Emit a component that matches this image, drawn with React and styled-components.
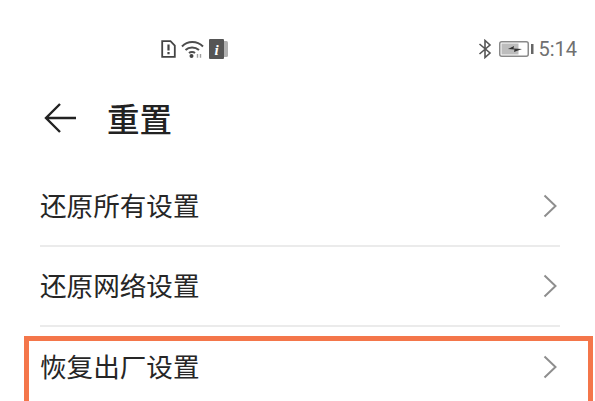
import styled, { createGlobalStyle } from 'styled-components';

const GlobalStyle = createGlobalStyle`
  html, body {
    margin: 0;
    padding: 0;
    background: #ffffff;
    overflow: hidden;
  }
`;

const Page = styled.div`
  position: relative;
  width: 595px;
  height: 401px;
  overflow: hidden;
  background: #ffffff;
  font-family: "Noto Sans CJK SC", "Liberation Sans", sans-serif;
  color: #262626;
`;

const StatusBar = styled.div`
  height: 38px;
  padding-top: 30px;
  display: flex;
  align-items: center;
  justify-content: space-between;
  padding-left: 161px;
  padding-right: 18px;
`;

const StatusGroup = styled.div`
  display: flex;
  align-items: center;
  gap: ${(p) => p.$gap}px;
`;

const Clock = styled.span`
  font-family: "Roboto", "Liberation Sans", sans-serif;
  font-size: 20px;
  color: #707070;
  margin-left: -3px;
`;

const Header = styled.div`
  height: 64px;
  margin-top: 18px;
  display: flex;
  align-items: center;
  padding-left: 44px;
  gap: 31px;
`;

const Title = styled.h1`
  margin: 0;
  font-size: 32.5px;
  font-weight: 500;
  line-height: 44px;
  color: #222222;
`;

const List = styled.div`
  margin-top: 17px;
  padding: 0 35px 0 40px;
`;

const Row = styled.div`
  box-sizing: border-box;
  height: 80px;
  display: flex;
  align-items: center;
  justify-content: space-between;
  padding-right: 3px;
  border-bottom: 2px solid #ebebeb;
  &:last-child {
    height: 75px;
    padding-top: 5px;
    border-bottom: none;
  }
`;

const RowLabel = styled.span`
  font-size: 26.6px;
  line-height: 36px;
  margin-bottom: 2px;
  color: #262626;
`;

const Highlight = styled.div`
  position: absolute;
  left: 24px;
  right: 2px;
  top: 336px;
  bottom: 0;
  border: 5px solid #f4764a;
  border-bottom: none;
  pointer-events: none;
`;

const Chevron = () => (
  <svg width="14" height="24" viewBox="0 0 14 24" fill="none" stroke="#8e8e8e" strokeWidth="2">
    <path d="M1.5 1.5 L12.5 12 L1.5 22.5" />
  </svg>
);

const BackArrow = () => (
  <svg width="32" height="32" viewBox="0 0 32 32" fill="none" stroke="#222222" strokeWidth="2.4">
    <path d="M16 2 L2 16 L16 30 M2 16 H32" />
  </svg>
);

const SimAlert = () => (
  <svg width="15" height="18" viewBox="0 0 15 18" fill="none">
    <path d="M1.2 1.2 H9.5 L13.8 5.5 V16.8 H1.2 Z" stroke="#444444" strokeWidth="1.8" />
    <path d="M7.5 4.5 V10.5 M7.5 12 V14.2" stroke="#444444" strokeWidth="2.2" />
  </svg>
);

const Wifi = () => (
  <svg width="23" height="18" viewBox="0 0 23 18" fill="none" stroke="#4d4d4d" strokeWidth="2">
    <path d="M1 6.5 C6.5 0.5 16 0.5 22 6.5" />
    <path d="M4.5 10 C8 6.5 14 6.5 18 10" />
    <path d="M8 13 C9.5 11.8 12.5 11.8 14 13" />
    <circle cx="10.5" cy="16" r="2" fill="#444444" stroke="none" />
    <path d="M16.5 14 V17.8 M19.5 14 V17.8" stroke="#a0a0a0" strokeWidth="1.4" />
  </svg>
);

const InfoCard = () => (
  <svg width="19" height="20" viewBox="0 0 19 20">
    <rect x="13" y="2" width="6" height="16" rx="1.5" fill="#b0b0b0" />
    <rect x="0" y="0" width="15" height="20" rx="1" fill="#555555" />
    <text x="7.5" y="15.5" fontSize="15" fontStyle="italic" fontWeight="700" textAnchor="middle" fill="#ffffff" fontFamily="Liberation Serif, serif">i</text>
  </svg>
);

const Bluetooth = () => (
  <svg width="14" height="20" viewBox="0 0 14 20" fill="none" stroke="#555555" strokeWidth="1.6">
    <path d="M1.5 5 L12 14 L7 18.5 V1.5 L12 6 L1.5 15" />
  </svg>
);

const Battery = () => (
  <svg width="35" height="16" viewBox="0 0 35 16">
    <rect x="0.75" y="0.75" width="28.5" height="14.5" rx="2" fill="none" stroke="#8a8a8a" strokeWidth="1.5" />
    <rect x="2.5" y="2.5" width="17" height="11" fill="#bdbdbd" />
    <path d="M9 8 L15 5 L14.5 7.5 L23 8 L15 11 L15.5 8.5 Z" fill="#333333" />
    <rect x="32" y="3" width="2.5" height="10" fill="#666666" />
  </svg>
);

const rows = ['还原所有设置', '还原网络设置', '恢复出厂设置'];

export default function App() {
  return (
    <Page>
      <GlobalStyle />
      <StatusBar>
        <StatusGroup $gap={5}>
          <SimAlert />
          <Wifi />
          <InfoCard />
        </StatusGroup>
        <StatusGroup $gap={7}>
          <Bluetooth />
          <Battery />
          <Clock>5:14</Clock>
        </StatusGroup>
      </StatusBar>
      <Header>
        <BackArrow />
        <Title>重置</Title>
      </Header>
      <List>
        {rows.map((label) => (
          <Row key={label}>
            <RowLabel>{label}</RowLabel>
            <Chevron />
          </Row>
        ))}
      </List>
      <Highlight />
    </Page>
  );
}
